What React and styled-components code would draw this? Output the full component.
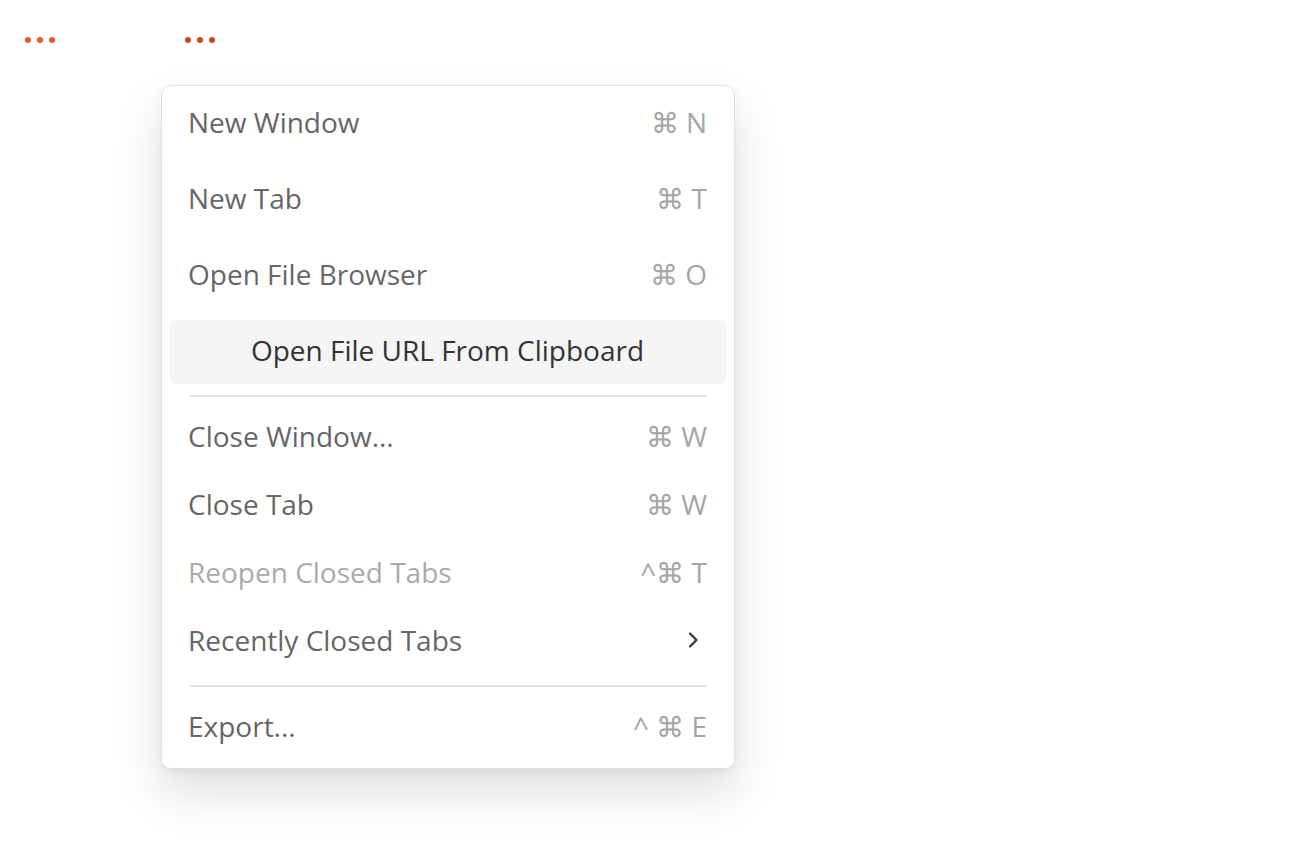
import React from 'react'
import styled, { createGlobalStyle } from 'styled-components'

const GlobalStyle = createGlobalStyle`
	html, body {
		margin: 0;
		padding: 0;
		background: #fff;
		font-family: "Open Sans", Lato, sans-serif;
	}
	* {
		box-sizing: border-box;
	}
`

const groups = [
	{
		tall: true,
		items: [
			{ label: 'New Window', keys: '⌘ N' },
			{ label: 'New Tab', keys: '⌘ T' },
			{ label: 'Open File Browser', keys: '⌘ O' },
			{ label: 'Open File URL From Clipboard', active: true },
		],
	},
	{
		items: [
			{ label: 'Close Window...', keys: '⌘ W' },
			{ label: 'Close Tab', keys: '⌘ W' },
			{ label: 'Reopen Closed Tabs', keys: '^⌘ T', disabled: true },
			{ label: 'Recently Closed Tabs', submenu: true },
		],
	},
	{
		items: [{ label: 'Export...', keys: '^ ⌘ E' }],
	},
]

function Dots({ dark }) {
	return (
		<DotRow>
			<Dot $dark={dark} />
			<Dot $dark={dark} />
			<Dot $dark={dark} />
		</DotRow>
	)
}

function Chevron() {
	return (
		<ChevronIcon width="14" height="20" viewBox="0 0 14 20" fill="none">
			<path d="M4 3.5l6.5 6.5L4 16.5" stroke="#333" strokeWidth="2.2" strokeLinecap="round" strokeLinejoin="round" />
		</ChevronIcon>
	)
}

function App() {
	return (
		<>
			<GlobalStyle />
			<Page>
				<Toolbar>
					<Trigger>
						<Dots />
					</Trigger>
					<Trigger>
						<Dots dark />
					</Trigger>
				</Toolbar>
				<Menu>
					{groups.map((group, gi) => (
						<React.Fragment key={gi}>
							{gi === 1 && <Separator $top={11} $bottom={13} />}
							{gi === 2 && <Separator $top={15} $bottom={13} />}
							<Group>
								{group.items.map((item) => (
									<Item
										key={item.label}
										$tall={group.tall}
										$active={item.active}
										$disabled={item.disabled}
									>
										<Label>{item.label}</Label>
										{item.keys && <Keys>{item.keys}</Keys>}
										{item.submenu && <Chevron />}
									</Item>
								))}
							</Group>
						</React.Fragment>
					))}
				</Menu>
			</Page>
		</>
	)
}

export default App

const Page = styled.div`
	width: 1300px;
	height: 854px;
	position: relative;
`
const Toolbar = styled.div`
	display: flex;
	gap: 130px;
	padding: 34px 0 0 25px;
`
const Trigger = styled.div`
	display: flex;
	align-items: center;
	height: 12px;
`
const DotRow = styled.div`
	display: flex;
	gap: 6px;
`
const Dot = styled.span`
	width: 6px;
	height: 6px;
	border-radius: 50%;
	background: ${(p) => (p.$dark ? '#c8481f' : '#ea5a25')};
`
const Menu = styled.div`
	position: absolute;
	left: 161px;
	top: 85px;
	width: 574px;
	padding: 6px 7px 12px;
	background: #fff;
	border: 1px solid #e2e2e2;
	border-radius: 10px;
	box-shadow: 0 24px 48px rgba(0, 0, 0, 0.13), 0 4px 10px rgba(0, 0, 0, 0.05);
`
const Group = styled.div`
	display: flex;
	flex-direction: column;
	gap: 12px;
`
const Item = styled.div`
	display: flex;
	align-items: center;
	justify-content: ${(p) => (p.$active ? 'center' : 'space-between')};
	height: ${(p) => (p.$tall ? '64px' : '56px')};
	padding: 0 20px 4px 19px;
	border-radius: 8px;
	background: ${(p) => (p.$active ? '#f5f5f5' : 'transparent')};
	color: ${(p) => (p.$active ? '#333' : p.$disabled ? '#aaa' : '#666')};
	font-size: 28px;
	line-height: 1;
`
const Label = styled.span`
	white-space: nowrap;
`
const Keys = styled.span`
	color: #a5a5a5;
	white-space: nowrap;
`
const ChevronIcon = styled.svg`
	margin-right: 7px;
`
const Separator = styled.div`
	height: 2px;
	background: #e4e4e4;
	margin: ${(p) => `${p.$top}px 20px ${p.$bottom}px 21px`};
`
